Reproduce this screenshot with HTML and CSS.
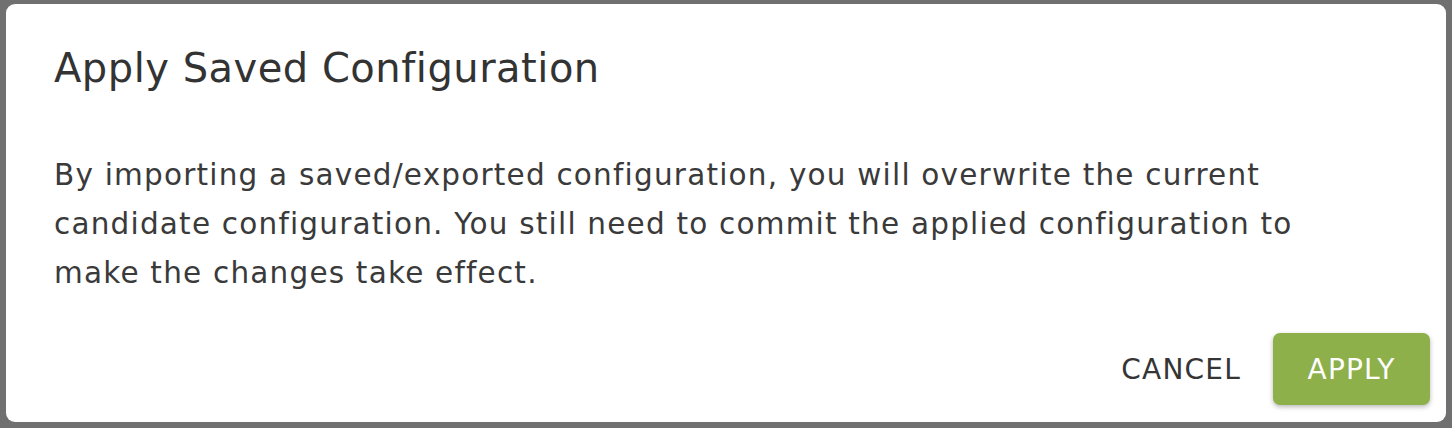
FILE: index.html
```html
<!DOCTYPE html>
<html>
<head>
<meta charset="utf-8">
<link rel="stylesheet" href="styles.css">
</head>
<body>
<div class="dialog">
  <h2 class="title">Apply Saved Configuration</h2>
  <p class="content">By importing a saved/exported configuration, you will overwrite the current candidate configuration. You still need to commit the applied configuration to make the changes take effect.</p>
  <div class="actions">
    <button class="btn btn-text">CANCEL</button>
    <button class="btn btn-primary">APPLY</button>
  </div>
</div>
</body>
</html>
```

FILE: styles.css
```css
html, body {
  margin: 0;
  padding: 0;
  background: #707070;
}
body {
  width: 1452px;
  height: 428px;
  overflow: hidden;
  font-family: "DejaVu Sans", "Noto Sans", sans-serif;
  color: #353535;
}
.dialog {
  box-sizing: border-box;
  margin: 4px 6px 0 6px;
  width: 1440px;
  height: 418px;
  background: #ffffff;
  border-radius: 9px;
  padding: 40px 16px 17px 48px;
  display: flex;
  flex-direction: column;
}
.title {
  margin: 0;
  font-size: 40px;
  line-height: 48px;
  font-weight: 400;
  letter-spacing: 0.5px;
  color: #333;
}
.content {
  margin: 59px 0 0 0;
  font-size: 29.5px;
  line-height: 49px;
  letter-spacing: 1.2px;
  max-width: 1300px;
  color: #3a3a3a;
}
.actions {
  margin-top: auto;
  display: flex;
  justify-content: flex-end;
  align-items: center;
}
.btn {
  font-family: inherit;
  font-size: 28px;
  letter-spacing: 1.2px;
  height: 72px;
  border: none;
  border-radius: 7px;
  padding: 0 32px;
  cursor: pointer;
}
.btn-text {
  background: transparent;
  color: #353535;
}
.btn-primary {
  min-width: 157px;
  background: #8db04b;
  color: #ffffff;
  box-shadow: 0 2px 5px rgba(0,0,0,0.28);
}
```
